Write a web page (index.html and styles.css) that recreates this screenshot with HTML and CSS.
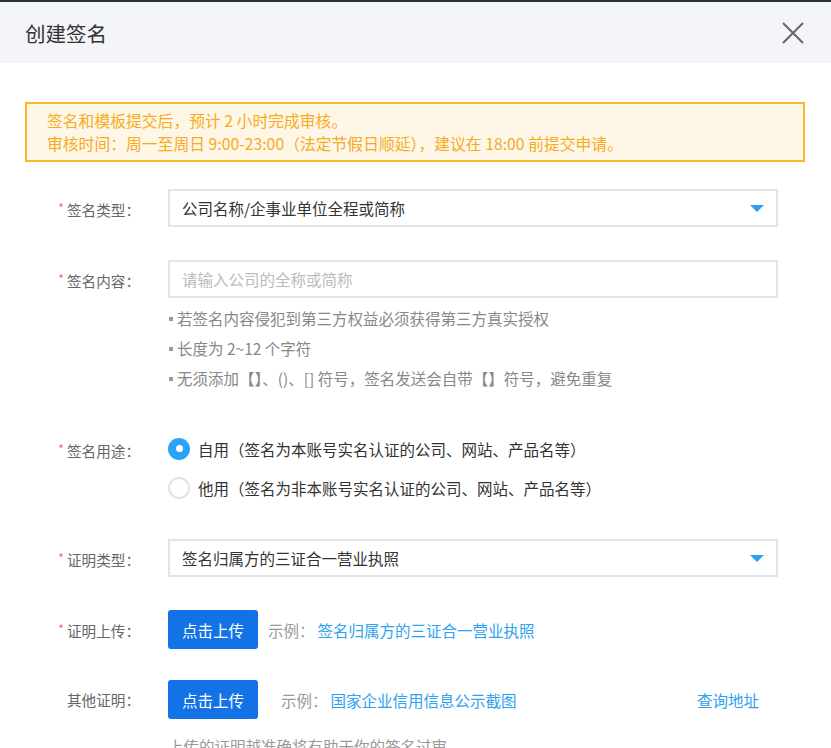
FILE: index.html
```html
<!DOCTYPE html>
<html lang="zh-CN">
<head>
<meta charset="utf-8">
<title>创建签名</title>
<link rel="stylesheet" href="styles.css">
</head>
<body>
<div class="topline"></div>
<header class="header">
  <h1 class="title">创建签名</h1>
  <svg class="close" width="24" height="24" viewBox="0 0 24 24"><path d="M2 2 L22 22 M22 2 L2 22" stroke="#666" stroke-width="2" fill="none"/></svg>
</header>
<main class="content">
  <div class="alert">
    <p>签名和模板提交后，预计 2 小时完成审核。</p>
    <p>审核时间：周一至周日 9:00-23:00（法定节假日顺延），建议在 18:00 前提交申请。</p>
  </div>

  <div class="row row-type">
    <label class="label"><span class="star">*</span> 签名类型：</label>
    <div class="select"><span>公司名称/企事业单位全程或简称</span><i class="caret"></i></div>
  </div>

  <div class="row row-content">
    <label class="label"><span class="star">*</span> 签名内容：</label>
    <div class="field">
      <div class="input placeholder">请输入公司的全称或简称</div>
      <ul class="hints">
        <li>若签名内容侵犯到第三方权益必须获得第三方真实授权</li>
        <li>长度为 2~12 个字符</li>
        <li>无须添加【】、()、[] 符号，签名发送会自带【】符号，避免重复</li>
      </ul>
    </div>
  </div>

  <div class="row row-use">
    <label class="label"><span class="star">*</span> 签名用途：</label>
    <div class="radios">
      <div class="radio checked"><i class="dot"></i>自用（签名为本账号实名认证的公司、网站、产品名等）</div>
      <div class="radio"><i class="dot"></i>他用（签名为非本账号实名认证的公司、网站、产品名等）</div>
    </div>
  </div>

  <div class="row row-proof">
    <label class="label"><span class="star">*</span> 证明类型：</label>
    <div class="select"><span>签名归属方的三证合一营业执照</span><i class="caret"></i></div>
  </div>

  <div class="row row-upload">
    <label class="label"><span class="star">*</span> 证明上传：</label>
    <div class="uploadline">
      <button class="btn">点击上传</button>
      <span class="example">示例：</span><a class="link">签名归属方的三证合一营业执照</a>
    </div>
  </div>

  <div class="row row-other">
    <label class="label">其他证明：</label>
    <div class="field">
      <div class="uploadline wide">
        <button class="btn">点击上传</button>
        <span class="example example-far">示例：</span><a class="link">国家企业信用信息公示截图</a>
        <a class="link query">查询地址</a>
      </div>
      <p class="note">上传的证明越准确将有助于你的签名过审</p>
    </div>
  </div>
</main>
</body>
</html>
```

FILE: styles.css
```css
* { box-sizing: border-box; }
html, body { margin: 0; padding: 0; }
body {
  width: 831px;
  height: 748px;
  overflow: hidden;
  background: #fff;
  font-family: "Microsoft YaHei", "Noto Sans CJK SC", "Noto Sans", sans-serif;
  font-size: 15.5px;
  color: #333;
}
.topline { height: 2px; background: #2b3242; }
.header {
  height: 61px;
  background: #f3f5f9;
  display: flex;
  align-items: center;
  justify-content: space-between;
  padding: 0 25px 0 25px;
}
.title { margin: 0; font-size: 20.5px; font-weight: normal; color: #333; }
.close { display: block; margin-right: 1px; margin-top: 1px; }

.content { padding: 39px 26px 0 25px; }

.alert {
  width: 780px;
  height: 60px;
  border: 2px solid #fbb62c;
  background: #fef6e6;
  padding: 5px 20px;
  color: #f7ab1f;
  font-size: 15.8px;
  line-height: 23px;
  white-space: nowrap;
}
.alert p { margin: 0; }

.row { display: flex; align-items: flex-start; }
.label {
  width: 115px;
  flex: none;
  margin-right: 28px;
  text-align: right;
  color: #666;
  font-size: 14.6px;
  line-height: 38px;
  white-space: nowrap;
}
.star { color: #f56c6c; font-size: 12px; vertical-align: 3px; }

.row-type { margin-top: 27px; }
.row-content { margin-top: 31px; }
.row-use { margin-top: 36px; }
.row-proof { margin-top: 32px; }
.row-upload { margin-top: 31px; }
.row-other { margin-top: 30px; }

.select, .input {
  width: 610px;
  height: 38px;
  border: 2px solid #e0e5ed;
  padding: 0 12px;
  display: flex;
  align-items: center;
  justify-content: space-between;
  background: #fff;
}
.placeholder { color: #bbb; }
.caret {
  width: 0; height: 0;
  border-left: 7px solid transparent;
  border-right: 7px solid transparent;
  border-top: 7px solid #2a9ff5;
  margin-right: 0;
  margin-top: 1px;
}
.field { display: flex; flex-direction: column; }

.hints { list-style: none; margin: 5px 0 0; padding: 0; color: #888; line-height: 30px; white-space: nowrap; }
.hints li { position: relative; padding-left: 9px; }
.hints li::before {
  content: "";
  position: absolute;
  left: 1px; top: 14px;
  width: 4px; height: 4px;
  background: #999;
}

.row-use .label { line-height: 39px; }
.radios { display: flex; flex-direction: column; }
.radio { display: flex; align-items: center; height: 39px; color: #333; white-space: nowrap; }
.dot {
  width: 22px; height: 22px;
  border-radius: 50%;
  border: 2px solid #dde3eb;
  margin-right: 8px;
  flex: none;
  position: relative;
}
.radio.checked .dot { background: #2ba4f6; border-color: #2ba4f6; }
.radio.checked .dot::after {
  content: "";
  position: absolute;
  left: 50%; top: 50%;
  width: 7px; height: 7px;
  margin: -3.5px 0 0 -3.5px;
  border-radius: 50%;
  background: #fff;
}

.uploadline { display: flex; align-items: center; height: 39px; white-space: nowrap; }
.uploadline.wide { width: 610px; }
.btn {
  width: 90px; height: 39px;
  border: none;
  border-radius: 3px;
  background: #1373e6;
  color: #fff;
  font: inherit;
  padding: 0;
}
.example { color: #999; margin-left: 10px; margin-right: 3px; }
.example-far { margin-left: 23px; }
.link { color: #2ea2f0; text-decoration: none; }
.query { margin-left: auto; margin-right: 19px; }
.row-other .label { line-height: 39px; }
.note { margin: 17px 0 0; color: #999; line-height: 20px; white-space: nowrap; }
```
